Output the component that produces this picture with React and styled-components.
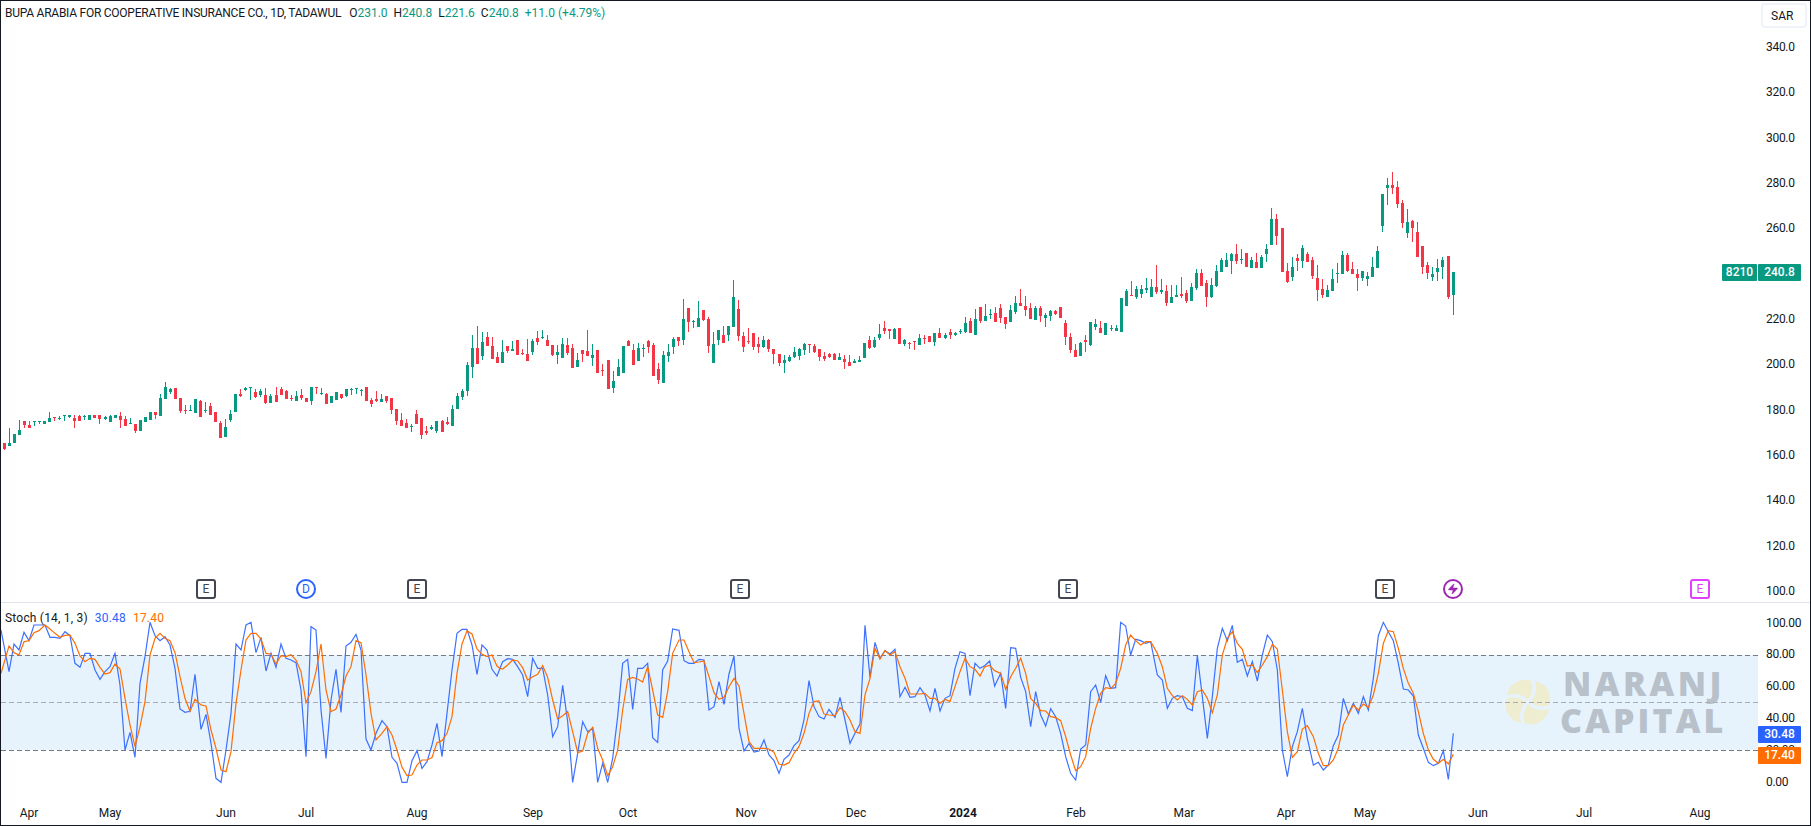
import React from "react";
import styled, { createGlobalStyle } from "styled-components";
import { Zap } from "lucide-react";

const GREEN = "#089981";
const RED = "#f23645";
const BLUE = "#2962ff";
const ORANGE = "#ff6d00";
const INK = "#131722";

// candles: colour, wick top, body top, body bottom, wick bottom
// values traced per strip at 3x, y0 is where the strip starts
const STRIPS = [
  {
    y0: 370,
    rows: [
      "r 219 219 236 240", "g 174 219 228 228", "g 192 192 219 219", "g 150 180 195 195", "r 153 153 165 174", "r 153 165 174 174",
      "g 153 153 156 168", "g 153 153 156 162", "g 153 153 162 162", "g 126 144 156 156", "r 141 141 144 153", "g 138 143 146 150",
      "g 135 135 138 153", "g 135 135 140 144", "r 135 144 153 174", "r 135 138 153 153", "g 135 138 140 150", "g 135 135 150 150",
      "r 135 135 144 144", "r 135 135 147 162", "g 138 141 147 150", "g 135 138 156 156", "g 135 135 144 144", "r 126 138 150 174",
      "r 138 147 168 168", "g 144 159 162 162", "r 162 162 183 189", "g 150 150 183 183", "g 141 141 156 156", "g 126 126 150 150",
      "r 126 126 135 147", "g 72 84 138 138", "g 36 51 87 87", "g 54 57 66 72", "r 54 54 87 87", "r 84 84 123 129",
      "r 105 120 123 132", "g 105 120 123 123", "g 87 87 129 129", "r 90 93 141 141", "g 96 120 123 129", "r 99 108 135 135",
      "r 126 126 156 156", "r 153 159 204 204", "g 147 171 201 201", "g 120 132 150 156", "g 72 72 126 126", "r 57 72 78 81",
      "g 51 54 60 63", "g 51 51 54 90", "r 57 66 81 84", "g 57 63 75 81", "r 54 75 99 102", "g 72 78 99 99",
      "r 51 75 96 96", "r 51 57 75 75", "r 60 63 87 87", "r 75 84 87 93", "g 63 78 93 93",
    ],
  },
  {
    y0: 310,
    rows: [
      "r 237 255 264 270", "r 264 264 276 276", "g 231 231 273 285", "r 231 231 234 252", "g 234 249 252 255", "r 249 252 282 282",
      "g 258 258 279 279", "g 246 246 270 270", "r 252 252 264 267", "g 237 237 258 261", "g 234 237 240 255", "g 234 234 237 252",
      "g 237 240 243 258", "r 231 231 273 273", "r 264 270 282 291", "r 243 267 273 276", "g 252 267 276 276", "r 258 258 273 279",
      "r 264 264 300 312", "r 297 297 333 345", "r 309 330 348 348", "r 327 339 354 354", "g 342 348 351 366", "r 300 312 342 342",
      "r 324 324 375 387", "r 348 363 369 375", "g 345 351 357 360", "g 333 333 363 369", "r 330 333 366 366", "r 321 336 342 345",
      "g 285 297 348 348", "g 249 258 297 297", "g 237 243 261 270", "g 156 165 243 258", "g 75 114 171 204", "r 48 114 162 162",
      "g 66 96 138 150", "r 66 81 108 108", "r 81 108 147 147", "r 126 141 159 159", "g 90 126 159 159", "r 108 108 123 129",
      "g 93 117 123 123", "r 90 90 135 135", "r 117 129 132 135", "r 87 132 153 153", "g 87 93 126 135", "r 63 84 96 105",
      "g 60 81 84 87", "r 75 90 108 108", "r 105 105 135 138", "g 105 126 135 162", "g 84 102 144 144", "r 84 105 129 135",
      "r 102 114 174 174", "g 129 150 171 171", "r 120 120 132 156", "r 60 123 138 138", "g 102 135 144 168", "r 120 120 189 189",
    ],
  },
  {
    y0: 270,
    rows: [
      "r 282 300 303 318", "r 270 270 357 357", "g 303 333 354 369", "g 267 291 318 318", "g 228 228 309 309", "r 210 213 228 228",
      "r 222 240 285 285", "g 219 234 273 273", "g 222 234 237 261", "r 210 213 231 249", "r 219 225 318 318", "r 279 297 330 342",
      "g 243 255 339 339", "g 222 246 258 276", "g 201 207 231 252", "r 201 201 213 228", "g 87 147 210 225", "r 114 114 156 186",
      "g 150 153 156 174", "g 93 144 171 171", "r 120 120 150 153", "r 141 147 228 249", "g 186 222 279 279", "g 180 180 210 225",
      "r 168 195 219 219", "g 168 168 195 213", "g 30 81 171 171", "r 90 117 198 213", "r 186 198 231 246", "r 174 213 216 222",
      "r 189 189 231 240", "r 201 222 231 249", "g 198 210 231 234", "r 207 210 237 246", "r 237 237 252 282", "r 252 252 279 288",
      "g 255 270 279 309", "g 255 261 273 276", "g 231 246 261 264", "g 234 237 258 270", "g 219 222 240 255", "r 222 222 225 249",
      "r 222 228 246 249", "r 237 237 261 273", "r 246 258 267 273", "r 249 252 261 264", "r 249 252 270 270", "g 249 261 270 270",
      "r 255 267 276 297", "r 255 276 288 288", "g 267 273 279 279", "g 258 270 276 276", "g 219 219 264 264", "r 198 210 234 237",
      "g 201 210 231 234", "g 162 192 204 210", "r 153 174 183 192", "r 177 177 183 207", "g 174 177 207 207", "r 174 174 222 222",
    ],
  },
  {
    y0: 270,
    rows: [
      "g 207 210 222 228", "r 216 219 222 237", "r 213 213 216 240", "g 192 204 225 225", "r 195 204 207 222", "r 198 198 216 216",
      "g 189 189 216 228", "r 174 189 204 204", "g 189 195 204 207", "r 177 186 195 207", "g 186 190 194 198", "g 177 183 186 192",
      "g 141 159 186 189", "r 144 153 189 189", "g 117 147 195 195", "r 111 111 153 159", "g 102 138 153 153", "g 117 132 135 147",
      "r 111 129 156 156", "r 102 114 144 159", "r 141 141 162 177", "g 105 120 156 156", "g 78 99 126 132", "r 57 99 108 108",
      "r 78 108 120 138", "r 99 114 147 147", "g 108 114 150 150", "r 108 114 138 156", "g 129 135 144 171", "g 120 123 138 153",
      "r 120 123 132 135", "r 111 111 144 144", "r 150 159 201 225", "r 189 201 240 249", "r 222 240 261 261", "g 216 219 258 258",
      "r 195 210 216 246", "g 156 156 225 228", "g 147 162 171 180", "r 153 174 189 189", "g 159 159 195 195", "g 165 174 177 183",
      "g 165 174 183 183", "g 84 84 186 186", "g 57 63 108 108", "r 33 75 78 78", "g 48 57 81 87", "g 45 57 72 84",
      "g 24 54 60 69", "g 27 51 81 81", "r -15 51 66 72", "g 27 60 66 72", "r 45 63 99 108", "g 45 81 99 99", "g 45 75 81 81",
    ],
  },
  {
    y0: 160,
    rows: [
      "r 351 402 408 414", "r 390 399 423 429", "g 369 381 423 423", "g 327 339 384 390", "r 327 339 378 378", "r 360 369 411 441",
      "g 354 375 411 414", "g 315 333 378 381", "g 294 300 336 336", "g 279 300 321 321", "g 279 282 303 342", "r 252 282 303 312",
      "g 267 297 300 312", "r 279 279 321 321", "g 291 300 324 324", "r 279 306 324 324", "g 285 291 324 324", "g 252 267 282 306",
      "g 144 177 255 255", "r 162 177 228 255", "r 204 204 336 336", "r 309 333 366 369", "g 291 321 351 363", "r 282 294 303 333",
      "g 255 264 303 324", "r 276 282 306 306", "r 291 300 348 357", "r 315 354 390 423", "r 357 387 405 414", "g 375 390 411 411",
      "g 327 357 393 393", "g 309 339 342 369", "g 273 285 342 342", "r 279 285 333 336", "r 306 327 342 342", "r 327 342 354 393",
      "g 333 333 354 363", "g 336 348 357 378", "g 291 321 351 351", "g 258 273 324 324", "g 102 102 198 216", "g 54 75 84 135",
      "r 36 75 84 102", "r 63 81 132 144", "r 120 129 189 204", "g 147 186 219 234", "r 180 183 204 246", "r 186 216 291 291",
      "r 258 258 321 342", "r 306 315 339 357", "g 321 342 351 363", "g 297 324 336 363", "g 291 300 321 357", "r 288 288 411 417",
      "g 336 336 405 465",
    ],
  },
];

const candles = STRIPS.flatMap((s) =>
  s.rows.map((row) => {
    const [c, wt, bt, bb, wb] = row.split(" ");
    return {
      up: c === "g",
      wickTop: s.y0 + Math.min(+wt, +bt) / 3,
      bodyTop: s.y0 + +bt / 3,
      bodyBottom: s.y0 + +bb / 3,
      wickBottom: s.y0 + Math.max(+wb, +bb) / 3,
    };
  })
);

// stochastic lines, same 3x trace, one chunk for each crop
const trace = (x0, y0, flat) => {
  const n = flat.trim().split(/[\s,]+/).map(Number);
  const out = [];
  for (let i = 0; i < n.length; i += 2) out.push(`${x0 + n[i] / 3},${y0 + n[i + 1] / 3}`);
  return out;
};

const BLUE_LINE = [
  ...trace(0, 570, `3 180 27 305 42 222 57 240 72 187 87 212 102 165 117 165 135 165 150 202 165 202 180 205 195 185 210 197 225 280 240 292 255 250 270 250 285 300 300 328 315 305 330 290 345 250 360 345 375 540 390 487 405 562 420 340 435 260 450 157 465 197 480 212 495 200 510 225 525 295 540 417 555 427 570 424 585 313 603 478 618 433 633 520 648 625 663 637 678 540 693 430 708 222 723 240 738 165 753 157 768 248 783 202 798 303 813 250 828 292 843 222 858 265 873 270 888 278 903 360 918 560 933 170 948 180 963 420 978 565 993 390 1008 298 1023 427 1038 228 1053 217 1068 193 1083 240 1098 507 1113 540 1128 490 1146 452 1161 470 1176 562 1191 580 1206 637 1221 637 1236 572 1251 542 1266 595 1281 575 1296 525 1311 460 1326 560 1341 430 1356 300 1371 190 1386 178 1401 178 1416 225 1431 313 1446 225 1461 240 1476 298 1491 318`),
  ...trace(500, 600, `0 205 8 185 23 176 38 178 53 200 68 225 83 290 98 175 113 205 128 205 143 285 158 410 173 380 188 256 203 365 218 547 233 460 248 365 263 395 278 385 293 547 308 490 323 547 338 475 353 350 368 190 383 178 398 328 413 205 428 205 443 190 458 413 473 427 488 210 503 183 518 87 537 91 552 182 567 190 582 190 597 178 612 180 627 330 642 320 657 245 672 313 687 222 702 168 717 385 732 453 747 430 762 456 777 453 792 420 807 465 822 482 837 520 852 478 867 465 882 437 897 422 912 360 927 242 942 320 957 350 972 357 987 328 1005 352 1020 292 1035 360 1050 430 1065 400 1080 372 1095 76 1110 232 1125 127 1140 175 1155 152 1170 162 1185 148 1200 290 1215 262 1230 292 1245 290 1260 263 1275 285 1290 333 1305 265 1320 333 1335 295 1350 287 1365 205 1380 155 1395 160 1410 287 1425 190`),
  ...trace(980, 600, `0 205 14 197 29 183 44 258 62 220 77 325 92 143 107 145 122 232 137 275 152 380 167 275 182 345 197 378 212 326 227 350 242 400 257 470 272 520 287 540 302 447 317 435 332 275 347 255 362 307 377 227 392 265 407 263 422 67 437 78 452 165 467 118 482 122 497 130 512 125 532 225 547 240 562 325 577 295 592 287 607 290 622 325 637 332 652 167 667 290 682 415 697 290 712 145 727 85 742 122 757 76 772 187 787 178 802 228 817 185 832 243 847 165 862 105 877 125 892 210 907 450 922 530 937 440 952 395 967 325 982 415 1000 495 1015 487 1030 510 1045 495 1060 437 1075 405 1090 295 1105 342 1120 310 1135 340 1150 290 1165 330 1180 235 1195 107 1210 67 1225 95 1240 122 1255 190 1270 267 1285 270 1300 288 1315 405 1330 445 1345 487 1360 497 1375 490 1390 452 1405 538 1420 400`),
];

const ORANGE_LINE = [
  ...trace(0, 570, `3 310 27 228 42 248 57 255 72 215 87 212 102 188 117 182 135 165 150 177 165 190 180 202 195 196 210 195 225 220 240 258 255 275 270 265 285 268 300 292 315 312 330 308 345 282 360 297 375 385 390 465 405 530 420 470 435 395 450 255 465 205 480 190 495 205 510 212 525 248 540 320 555 385 570 424 585 388 603 405 618 408 633 480 648 535 663 600 678 605 693 545 708 400 723 300 738 210 753 190 768 190 783 207 798 250 813 252 828 282 843 257 858 260 873 254 888 270 903 305 918 398 933 365 948 305 963 222 978 360 993 425 1008 417 1023 375 1038 318 1053 290 1068 212 1083 218 1098 315 1113 430 1128 510 1146 490 1161 470 1176 495 1191 540 1206 592 1221 617 1236 615 1251 585 1266 570 1281 570 1296 563 1311 518 1326 512 1341 490 1356 440 1371 310 1386 222 1401 183 1416 192 1431 237 1446 253 1461 260 1476 255 1491 288`),
  ...trace(500, 600, `0 205 8 207 23 195 38 180 53 183 68 203 83 240 98 230 113 223 128 197 143 232 158 300 173 357 188 347 203 335 218 395 233 458 248 453 263 400 278 382 293 445 308 480 323 527 338 500 353 450 368 330 383 238 398 232 413 237 428 246 443 200 458 270 473 345 488 352 503 275 518 160 537 120 552 120 567 155 582 188 597 186 612 183 627 230 642 278 657 298 672 292 687 260 702 235 717 258 732 340 747 425 762 445 777 445 792 445 807 447 822 457 837 492 852 495 867 488 882 460 897 440 912 400 927 340 942 305 957 303 972 342 987 345 1005 347 1020 323 1035 335 1050 360 1065 395 1080 400 1095 285 1110 235 1125 145 1140 177 1155 152 1170 165 1185 155 1200 200 1215 235 1230 282 1245 282 1260 282 1275 280 1290 295 1305 295 1320 310 1335 298 1350 304 1365 260 1380 215 1395 175 1410 200 1425 208`),
  ...trace(980, 600, `0 228 14 200 29 196 44 212 62 220 77 268 92 230 107 205 122 175 137 220 152 295 167 310 182 332 197 333 212 350 227 353 242 362 257 410 272 465 287 512 302 500 317 470 332 385 347 325 362 280 377 263 392 266 407 250 422 205 437 135 452 105 467 122 482 135 497 125 512 125 532 160 547 200 562 265 577 287 592 300 607 287 622 298 637 315 652 275 667 270 682 295 697 338 712 285 727 165 742 115 757 95 772 130 787 148 802 198 817 195 832 218 847 195 862 170 877 133 892 147 907 270 922 395 937 472 952 455 967 387 982 377 1000 410 1015 460 1030 497 1045 497 1060 480 1075 445 1090 375 1105 345 1120 315 1135 330 1150 312 1165 322 1180 285 1195 220 1210 130 1225 92 1240 95 1255 145 1270 205 1285 250 1300 280 1315 335 1330 400 1345 450 1360 478 1375 490 1390 478 1405 492 1420 463`),
];

const PRICE_TICKS = ["340.0", "320.0", "300.0", "280.0", "260.0", "240.0", "220.0", "200.0", "180.0", "160.0", "140.0", "120.0", "100.0"];
const STOCH_TICKS = ["100.00", "80.00", "60.00", "40.00", "20.00", "0.00"];

const TIME_TICKS = [
  { label: "Apr", x: 29 }, { label: "May", x: 110 }, { label: "Jun", x: 226 }, { label: "Jul", x: 306 },
  { label: "Aug", x: 417 }, { label: "Sep", x: 533 }, { label: "Oct", x: 628 }, { label: "Nov", x: 746 },
  { label: "Dec", x: 856 }, { label: "2024", x: 963, strong: true }, { label: "Feb", x: 1076 }, { label: "Mar", x: 1184 },
  { label: "Apr", x: 1286 }, { label: "May", x: 1365 }, { label: "Jun", x: 1478 }, { label: "Jul", x: 1584 },
  { label: "Aug", x: 1700 },
];

const MARKERS = [
  { x: 206, text: "E" }, { x: 306, text: "D", kind: "dividend" }, { x: 417, text: "E" }, { x: 740, text: "E" },
  { x: 1068, text: "E" }, { x: 1385, text: "E" }, { x: 1453, kind: "split" }, { x: 1700, text: "E", kind: "next" },
];

const MARKER_COLORS = { dividend: BLUE, split: "#9c27b0", next: "#e040fb" };

const GlobalStyle = createGlobalStyle`
  html, body {
    margin: 0;
    padding: 0;
    background: #fff;
  }
`;

const Frame = styled.div`
  box-sizing: border-box;
  width: 1811px;
  height: 826px;
  border: 1px solid ${INK};
  background: #fff;
  color: ${INK};
  font-family: Roboto, "Liberation Sans", sans-serif;
  font-size: 12px;
  display: flex;
  flex-direction: column;
  overflow: hidden;
`;

const PaneRow = styled.div`
  display: flex;
  height: ${(p) => p.$height}px;
  flex: none;
`;

const Pane = styled.div`
  position: relative;
  width: 1757px;
  flex: none;
`;

const Separator = styled.div`
  height: 1px;
  flex: none;
  background: #e0e3eb;
`;

const PlotSvg = styled.svg`
  position: absolute;
  inset: 0;
  display: block;
`;

const Legend = styled.div`
  position: absolute;
  left: 4px;
  top: ${(p) => p.$top}px;
  display: flex;
  gap: ${(p) => p.$gap}px;
  line-height: 14px;
  white-space: nowrap;
  letter-spacing: ${(p) => p.$spacing}px;
  z-index: 2;
`;

const LegendTitle = styled.span`
  letter-spacing: -0.25px;
  margin-right: 2px;
`;

const Value = styled.span`
  color: ${(p) => p.$color};
`;

const Marker = styled.div`
  position: absolute;
  bottom: 3px;
  left: ${(p) => p.$x}px;
  transform: translateX(-50%);
  box-sizing: border-box;
  width: 20px;
  height: 20px;
  display: flex;
  align-items: center;
  justify-content: center;
  background: #fff;
  border: 2px solid ${(p) => MARKER_COLORS[p.$kind] || "#434651"};
  border-radius: ${(p) => (p.$kind === "dividend" || p.$kind === "split" ? "50%" : "3px")};
  color: ${(p) => MARKER_COLORS[p.$kind] || "#434651"};
  font-size: 12px;
  line-height: 1;
`;

const Axis = styled.div`
  position: relative;
  flex: 1;
  display: flex;
  flex-direction: column;
  padding-top: ${(p) => p.$top}px;
`;

const CurrencyButton = styled.div`
  box-sizing: border-box;
  width: 46px;
  height: 25px;
  margin-left: 3px;
  padding-left: 8px;
  display: flex;
  align-items: center;
  border: 2px solid #f0f3fa;
  border-radius: 4px;
`;

const Ticks = styled.div`
  display: flex;
  flex-direction: column;
  gap: ${(p) => p.$gap}px;
  margin-top: ${(p) => p.$top}px;
  padding-left: 8px;
`;

const Tick = styled.div`
  height: 14px;
  line-height: 14px;
  letter-spacing: -0.3px;
  white-space: nowrap;
`;

const TagGroup = styled.div`
  position: absolute;
  top: ${(p) => p.$top}px;
  right: 9px;
  display: flex;
  gap: 1px;
`;

const Tag = styled.div`
  height: 17px;
  line-height: 17px;
  width: ${(p) => p.$width}px;
  text-align: center;
  color: #fff;
  background: ${(p) => p.$color};
  border-radius: 1px;
  font-weight: 500;
`;

const Band = styled.div`
  position: absolute;
  left: 0;
  right: 0;
  top: 52px;
  height: 95px;
  background: #e6f3fd;
`;

const Watermark = styled.div`
  position: absolute;
  left: 1504px;
  top: 62px;
  display: flex;
  align-items: center;
  gap: 11px;
`;

const WatermarkText = styled.div`
  display: flex;
  flex-direction: column;
  font-family: "Open Sans", sans-serif;
  font-weight: 800;
  font-size: 34px;
  line-height: 37px;
  color: #b8c0ca;
`;

const WatermarkLine = styled.span`
  letter-spacing: ${(p) => p.$spacing}px;
  margin-left: ${(p) => p.$shift}px;
`;

const TimeAxis = styled.div`
  flex: 1;
  display: flex;
  padding-top: 11px;
  padding-left: ${TIME_TICKS[0].x - 1}px;
  line-height: 14px;
`;

const TimeCell = styled.div`
  flex: 0 0 ${(p) => p.$width}px;
  white-space: nowrap;
`;

const TimeLabel = styled.span`
  display: inline-block;
  transform: translateX(-50%);
  font-weight: ${(p) => (p.$strong ? 700 : 400)};
`;

// one pinwheel blade, the other three are this rotated
const PETAL = "M0 -2 C4 -7 6 -14 3.5 -22 A19 19 0 0 0 -22 -7 C-14 -10 -6 -8 0 -2 Z";

const Logo = () => (
  <svg width="46" height="46" viewBox="-24 -24 48 48">
    {[0, 90, 180, 270].map((r) => (
      <path key={r} d={PETAL} fill="#efedd0" transform={`rotate(${r})`} />
    ))}
  </svg>
);

const CandleChart = () => (
  <PlotSvg width="1757" height="601" viewBox="1 1 1757 601" shapeRendering="crispEdges">
    {candles.map((c, i) => {
      const x = Math.floor(4.4 + 5.03 * i);
      const color = c.up ? GREEN : RED;
      return (
        <g key={i} fill={color}>
          <rect x={x} y={c.wickTop} width="1" height={c.wickBottom - c.wickTop} />
          <rect x={x - 1} y={c.bodyTop} width="3" height={Math.max(1, c.bodyBottom - c.bodyTop)} />
        </g>
      );
    })}
  </PlotSvg>
);

const StochChart = () => (
  <PlotSvg width="1757" height="192" viewBox="1 603 1757 192">
    <g shapeRendering="crispEdges">
      <line x1="1" x2="1758" y1="655.5" y2="655.5" stroke="#787b86" strokeDasharray="5 3" />
      <line x1="1" x2="1758" y1="702.5" y2="702.5" stroke="#a9acb4" strokeDasharray="5 3" />
      <line x1="1" x2="1758" y1="750.5" y2="750.5" stroke="#787b86" strokeDasharray="5 3" />
    </g>
    <polyline points={BLUE_LINE.join(" ")} fill="none" stroke={BLUE} strokeOpacity="0.9" strokeWidth="1.2" />
    <polyline points={ORANGE_LINE.join(" ")} fill="none" stroke={ORANGE} strokeWidth="1.2" />
  </PlotSvg>
);

export default function App() {
  return (
    <>
      <GlobalStyle />
      <Frame>
        <PaneRow $height={601}>
          <Pane>
            <CandleChart />
            <Legend $top={5} $gap={6} $spacing={0}>
              <LegendTitle>BUPA ARABIA FOR COOPERATIVE INSURANCE CO., 1D, TADAWUL</LegendTitle>
              <span>O<Value $color={GREEN}>231.0</Value></span>
              <span>H<Value $color={GREEN}>240.8</Value></span>
              <span>L<Value $color={GREEN}>221.6</Value></span>
              <span>C<Value $color={GREEN}>240.8</Value></span>
              <Value $color={GREEN}>+11.0 (+4.79%)</Value>
            </Legend>
            {MARKERS.map((m) => (
              <Marker key={m.x} $x={m.x - 1} $kind={m.kind}>
                {m.text || <Zap size={12} fill="#9c27b0" strokeWidth={1} />}
              </Marker>
            ))}
          </Pane>
          <Axis $top={2}>
            <CurrencyButton>SAR</CurrencyButton>
            <Ticks $gap={31.33} $top={12}>
              {PRICE_TICKS.map((t) => (
                <Tick key={t}>{t}</Tick>
              ))}
            </Ticks>
            <TagGroup $top={263}>
              <Tag $width={35} $color={GREEN}>8210</Tag>
              <Tag $width={43} $color={GREEN}>240.8</Tag>
            </TagGroup>
          </Axis>
        </PaneRow>
        <Separator />
        <PaneRow $height={192}>
          <Pane>
            <Band />
            <Watermark>
              <Logo />
              <WatermarkText>
                <WatermarkLine $spacing={3.5} $shift={1}>NARANJ</WatermarkLine>
                <WatermarkLine $spacing={3.1} $shift={-2}>CAPITAL</WatermarkLine>
              </WatermarkText>
            </Watermark>
            <StochChart />
            <Legend $top={8} $gap={7} $spacing={0.2}>
              <span>Stoch (14, 1, 3)</span>
              <Value $color={BLUE}>30.48</Value>
              <Value $color={ORANGE}>17.40</Value>
            </Legend>
          </Pane>
          <Axis $top={12.5}>
            <Ticks $gap={17.9} $top={0}>
              {STOCH_TICKS.map((t) => (
                <Tick key={t}>{t}</Tick>
              ))}
            </Ticks>
            <TagGroup $top={123}>
              <Tag $width={43} $color={BLUE}>30.48</Tag>
            </TagGroup>
            <TagGroup $top={144}>
              <Tag $width={43} $color={ORANGE}>17.40</Tag>
            </TagGroup>
          </Axis>
        </PaneRow>
        <TimeAxis>
          {TIME_TICKS.map((t, i) => (
            <TimeCell key={i} $width={i < TIME_TICKS.length - 1 ? TIME_TICKS[i + 1].x - t.x : 40}>
              <TimeLabel $strong={t.strong}>{t.label}</TimeLabel>
            </TimeCell>
          ))}
        </TimeAxis>
      </Frame>
    </>
  );
}
